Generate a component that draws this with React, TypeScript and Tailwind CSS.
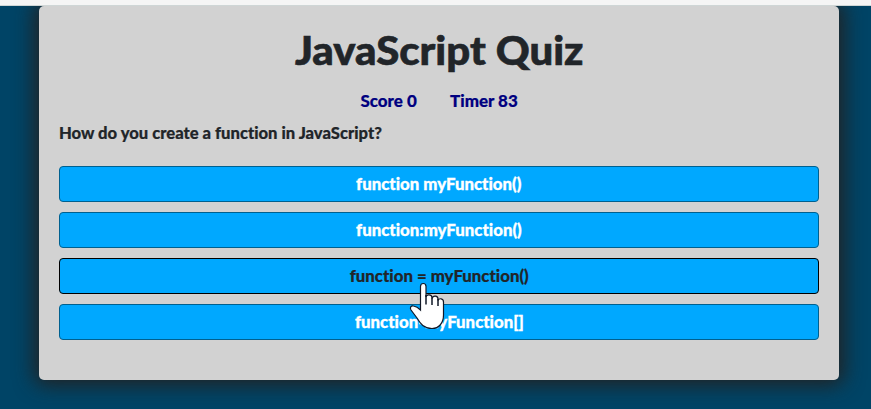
const base =
  "flex h-9 w-full items-center justify-center rounded border text-base font-black whitespace-pre bg-[#00a8ff]";
const light = " border-[#00608f] text-white";

export default function App() {
  return (
    <div className="relative h-[409px] w-[871px] overflow-hidden bg-[#004466] font-['Lato',sans-serif] text-[#212529] [font-variant-ligatures:none]">
      <div className="h-[5px] bg-[#f5f5f5]" />
      <div className="h-px bg-[#cfd6d6]" />
      <div className="ml-[39px] h-[374px] w-[800px] rounded-[5px] bg-[#d2d2d2] px-5 pt-5 shadow-[0_0_20px_5px_#222222] [clip-path:inset(0_-39px_-39px_-39px)]">
        <h1 className="flex h-12 items-center justify-center text-[39px] font-black whitespace-pre">
          <span className="scale-x-[1.075] [-webkit-text-stroke:0.6px]">JavaScript Quiz</span>
        </h1>
        <div className="mt-[15px] flex h-6 items-center justify-center gap-9 text-base font-black text-[#000080]">
          <span className="scale-x-[1.06] [-webkit-text-stroke:0.2px]">Score 0</span>
          <span className="scale-x-[1.06] [-webkit-text-stroke:0.2px]">Timer 83</span>
        </div>
        <p className="mt-2 flex h-6 items-center text-base font-black">
          <span className="origin-left scale-x-[1.038] [-webkit-text-stroke:0.2px]">
            How do you create a function in JavaScript?
          </span>
        </p>
        <div className="mt-[21px] flex flex-col gap-[10px]">
          <button className={base + light}>
            <span className="scale-x-[1.05] [-webkit-text-stroke:0.3px]">function myFunction()</span>
          </button>
          <button className={base + light}>
            <span className="scale-x-[1.05] [-webkit-text-stroke:0.3px]">function:myFunction()</span>
          </button>
          <button className={base + " border-black text-[#212529]"}>
            <span className="scale-x-[1.05] [-webkit-text-stroke:0.2px]">function = myFunction()</span>
          </button>
          <button className={base + light}>
            <span className="scale-x-[1.05] [-webkit-text-stroke:0.3px]">function-myFunction[]</span>
          </button>
        </div>
      </div>
      <svg className="absolute top-[281px] left-[408px]" width="38" height="50" viewBox="0 0 38 50">
        <path
          d="M12.5 29V5.5C12.5 1.500 18 1.500 18 5.500V16C18.500 13 23.500 13 24 16.500V17.500C25 14 30 14.500 30 18V19.500C31 17 35.500 17 35.500 21V34C35.500 42 31 47.500 24 47.500C16 47.500 12.500 43 9 37L3 29C1.500 26.500 3 24.500 5.500 25C8.500 25.500 10.500 27 12.500 29Z"
          fill="white"
          stroke="#111827"
          strokeWidth="1.2"
        />
        <path d="M18 14V23.500M24 16.500V24M30 18V25" fill="none" stroke="#111827" strokeWidth="1.500" />
      </svg>
    </div>
  );
}
